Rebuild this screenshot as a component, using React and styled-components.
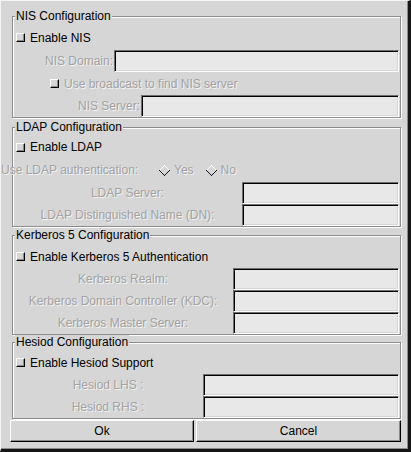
import React from "react";
import styled, { createGlobalStyle } from "styled-components";

const GlobalStyle = createGlobalStyle`
  html, body {
    margin: 0;
    padding: 0;
    background: #d6d6d6;
  }
  body {
    font-family: "Liberation Sans", Arial, sans-serif;
    font-size: 12px;
    color: #000;
  }
`;

function Diamond() {
  return (
    <svg width="11" height="11" viewBox="0 0 11 11" shapeRendering="crispEdges">
      <path d="M0.5 5.5 L5.5 0.5 L10.5 5.5" stroke="#fff" fill="none" />
      <path d="M0.5 5.5 L5.5 10.5 L10.5 5.5" stroke="#111" fill="none" />
    </svg>
  );
}

function CheckRow({ label, h, indent, disabled }) {
  return (
    <Check h={h} indent={indent}>
      <CheckBox />
      <Label disabled={disabled}>{label}</Label>
    </Check>
  );
}

function EntryRow({ label, h, col, align }) {
  return (
    <Row h={h} col={col}>
      <Cell align={align}>
        <Label disabled>{label}</Label>
      </Cell>
      <Entry disabled />
    </Row>
  );
}

export default function App() {
  return (
    <>
      <GlobalStyle />
      <Window>
        <Frame top={8}>
          <Title>NIS Configuration</Title>
          <CheckRow label="Enable NIS" h={25} />
          <EntryRow label="NIS Domain:" h={22} col={101} align="right" />
          <CheckRow label="Use broadcast to find NIS server" h={23} indent={34} disabled />
          <EntryRow label="NIS Server:" h={22} col={128} align="right" />
        </Frame>

        <Frame top={8} mt={9}>
          <Title>LDAP Configuration</Title>
          <CheckRow label="Enable LDAP" h={22} />
          <RadioRow>
            <RadioCaption>
              <Label disabled>Use LDAP authentication:</Label>
            </RadioCaption>
            <Radio>
              <Diamond />
              <Label disabled>Yes</Label>
            </Radio>
            <Radio>
              <Diamond />
              <Label disabled>No</Label>
            </Radio>
          </RadioRow>
          <EntryRow label="LDAP Server:" h={22} col={229} />
          <EntryRow label="LDAP Distinguished Name (DN):" h={22} col={229} />
        </Frame>

        <Frame top={9} mt={8}>
          <Title>Kerberos 5 Configuration</Title>
          <CheckRow label="Enable Kerberos 5 Authentication" h={23} />
          <EntryRow label="Kerberos Realm:" h={22} col={220} />
          <EntryRow label="Kerberos Domain Controller (KDC):" h={22} col={220} />
          <EntryRow label="Kerberos Master Server:" h={22} col={220} />
        </Frame>

        <Frame top={8} mt={7}>
          <Title>Hesiod Configuration</Title>
          <CheckRow label="Enable Hesiod Support" h={23} />
          <EntryRow label="Hesiod LHS :" h={22} col={190} />
          <EntryRow label="Hesiod RHS :" h={22} col={190} />
        </Frame>

        <ButtonBar>
          <Button w={184}>Ok</Button>
          <Button>Cancel</Button>
        </ButtonBar>
      </Window>
    </>
  );
}

const Window = styled.div`
  box-sizing: border-box;
  width: 411px;
  height: 452px;
  display: flex;
  flex-direction: column;
  padding: 15px 7px 7px 9px;
  border-top: 1px solid #f4f4f4;
  border-left: 1px solid #f4f4f4;
  border-right: 3px solid #161616;
  border-bottom: 3px solid #161616;
  box-shadow: inset -1px -1px 0 #8a8a8a;
`;

const Frame = styled.div`
  position: relative;
  margin: ${(p) => p.mt || 0}px 0 0 2px;
  padding: ${(p) => p.top}px 1px 0 0;
  border: 1px solid #8c8c8c;
  box-shadow: inset 1px 1px 0 #fff, 1px 1px 0 #fff;
`;

const Title = styled.div`
  position: absolute;
  top: -8px;
  left: 2px;
  padding: 0 1px;
  line-height: 14px;
  background: #d6d6d6;
  white-space: nowrap;
`;

const Label = styled.span`
  white-space: nowrap;
  line-height: 14px;
  color: ${(p) => (p.disabled ? "#a3a3a3" : "#000")};
  text-shadow: ${(p) => (p.disabled ? "1px 1px 0 #f2f2f2" : "none")};
`;

const Check = styled.div`
  display: flex;
  align-items: center;
  gap: 5px;
  height: ${(p) => p.h}px;
  padding-left: ${(p) => (p.indent || 0) + 3}px;
`;

const CheckBox = styled.span`
  box-sizing: border-box;
  width: 9px;
  height: 9px;
  flex: none;
  background: #d6d6d6;
  border-top: 1px solid #fff;
  border-left: 1px solid #fff;
  border-right: 1px solid #000;
  border-bottom: 1px solid #000;
  box-shadow: inset -1px -1px 0 #8a8a8a;
`;

const Row = styled.div`
  display: grid;
  grid-template-columns: ${(p) => p.col}px 1fr;
  align-items: center;
  height: ${(p) => p.h}px;
`;

const Cell = styled.div`
  text-align: ${(p) => p.align || "center"};
  padding-right: ${(p) => (p.align === "right" ? 1 : 0)}px;
  white-space: nowrap;
`;

const Entry = styled.input`
  box-sizing: border-box;
  width: 100%;
  height: 22px;
  margin: 0;
  padding: 0;
  background: #e8e8e8;
  border-top: 1px solid #6e6e6e;
  border-left: 1px solid #6e6e6e;
  border-right: 1px solid #fff;
  border-bottom: 1px solid #fff;
  box-shadow: inset 1px 1px 0 #000, inset -1px -1px 0 #d6d6d6;
  outline: none;
`;

const RadioRow = styled.div`
  display: flex;
  align-items: center;
  height: 24px;
  margin-left: -12px;
`;

const RadioCaption = styled.span`
  flex: 0 0 158px;
`;

const Radio = styled.span`
  display: flex;
  align-items: center;
  gap: 4px;
  margin-left: 12px;

  &:nth-of-type(2) {
    margin-left: 0;
  }
`;

const ButtonBar = styled.div`
  display: flex;
  gap: 2px;
  margin-top: 1px;
  height: 22px;
`;

const Button = styled.button`
  box-sizing: border-box;
  flex: ${(p) => (p.w ? `0 0 ${p.w}px` : "1")};
  height: 22px;
  margin: 0;
  padding: 0;
  font: inherit;
  font-size: 12px;
  color: #000;
  background: #d6d6d6;
  border-top: 1px solid #fff;
  border-left: 1px solid #fff;
  border-right: 1px solid #000;
  border-bottom: 1px solid #000;
  box-shadow: inset -1px -1px 0 #8a8a8a;
`;
